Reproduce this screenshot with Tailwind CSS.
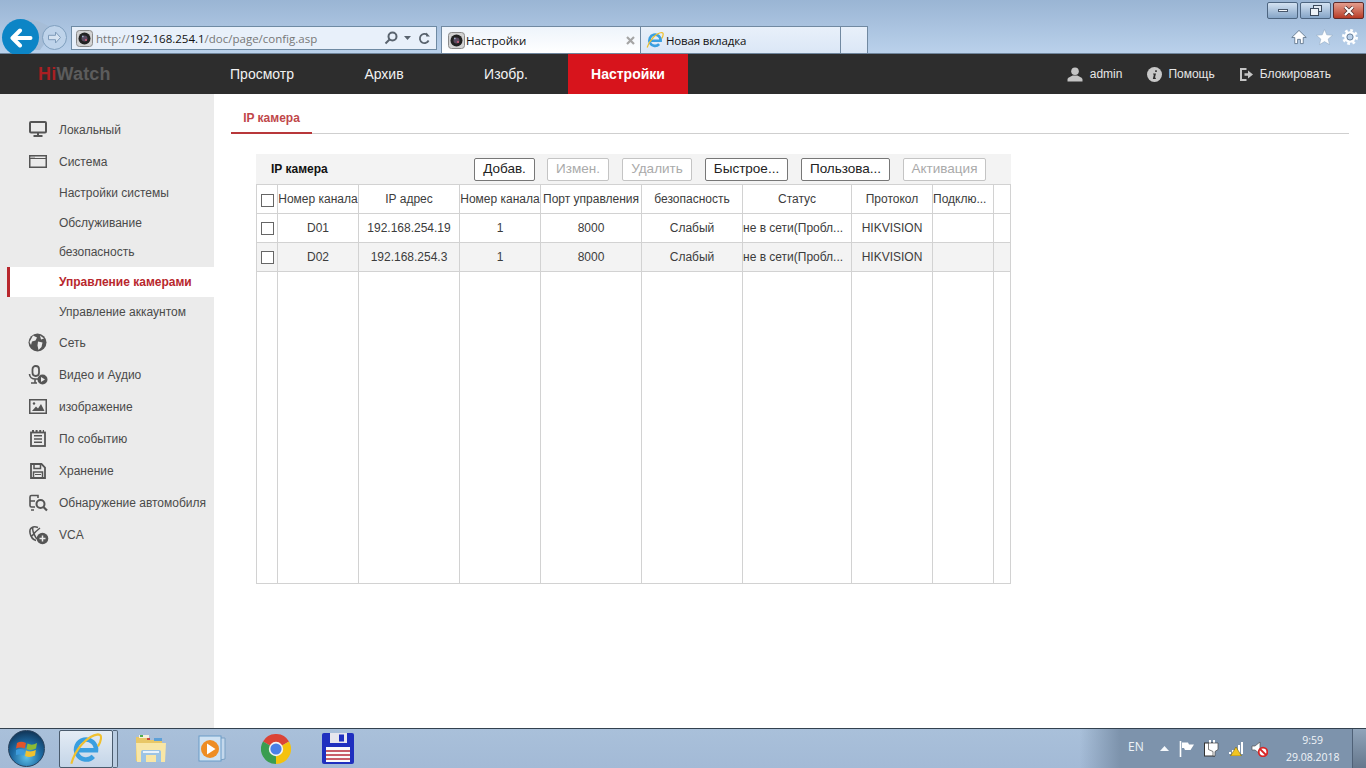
<!DOCTYPE html>
<html lang="ru">
<head>
<meta charset="utf-8">
<title>Настройки</title>
<script src="https://cdn.jsdelivr.net/npm/@tailwindcss/browser@4"></script>
</head>
<body class="w-[1366px] h-[768px] overflow-hidden bg-white font-['Liberation_Sans',Arial,sans-serif] text-[12px] text-[#404040] flex flex-col">

<!-- Browser chrome -->
<div class="h-[54px] shrink-0 relative bg-gradient-to-b from-[#9ab5d4] to-[#bad1eb] border-b border-[#6f859c] font-['Open_Sans',sans-serif]">
  <!-- window buttons -->
  <div class="absolute top-[2px] right-[2px] flex gap-[2px]">
    <div class="w-[31px] h-[17px] rounded-[2px] border border-[#4d6580] bg-gradient-to-b from-[#d3e2f2] to-[#86a5c7] flex items-center justify-center"><div class="w-[10px] h-[3px] bg-[#f4f7fb] border border-[#47566a]"></div></div>
    <div class="w-[31px] h-[17px] rounded-[2px] border border-[#4d6580] bg-gradient-to-b from-[#d3e2f2] to-[#86a5c7] flex items-center justify-center">
      <svg width="12" height="11" viewBox="0 0 12 11" fill="none" stroke="#3c4a5c"><rect x="3.5" y="0.5" width="8" height="6" fill="#dfe8f2"/><rect x="0.5" y="3.5" width="8" height="7" fill="#eef3f8"/></svg>
    </div>
    <div class="w-[31px] h-[17px] rounded-[2px] border border-[#5e2b2b] bg-gradient-to-b from-[#e39d8e] to-[#b73a26] flex items-center justify-center">
      <svg width="14" height="10" viewBox="0 0 14 10"><path d="M3 1L11 9M11 1L3 9" stroke="#4b2a2a" stroke-width="3.6"/><path d="M3 1L11 9M11 1L3 9" stroke="#fff" stroke-width="2.2"/></svg>
    </div>
  </div>
  <!-- tool icons -->
  <div class="absolute top-[29px] right-[8px] flex items-center gap-[9px]">
    <svg width="16" height="16" viewBox="0 0 17 17"><path d="M8.5 1.5L.8 9H4V15.5H7V11H10V15.5H13V9H16.2Z" fill="#fdfeff" stroke="#5e7389" stroke-width=".9"/></svg>
    <svg width="17" height="16" viewBox="0 0 18 17"><path d="M9 .5L11.4 6.2L17.6 6.7L12.9 10.7L14.3 16.6L9 13.4L3.7 16.6L5.1 10.7L.4 6.7L6.6 6.2Z" fill="#fdfeff" stroke="#8ba2ba" stroke-width=".5"/></svg>
    <svg width="16" height="16" viewBox="0 0 17 17"><circle cx="8.5" cy="8.5" r="7" fill="none" stroke="#fdfeff" stroke-width="3" stroke-dasharray="2.8 2.7"/><circle cx="8.5" cy="8.5" r="5" fill="none" stroke="#fdfeff" stroke-width="2.4"/><circle cx="8.5" cy="8.5" r="3.2" fill="#bad1eb" stroke="#5e7389" stroke-width=".8"/></svg>
  </div>

  <!-- wedge behind the back button -->
  <svg width="30" height="32" viewBox="0 0 30 32" class="absolute left-[26px] top-[18px]"><path d="M0 1C10 1 18 5 28 12L14 32H0Z" fill="#a6bdd7"/></svg>

  <div class="absolute left-0 right-0 bottom-0 h-[28px] flex items-end">
    <!-- back / forward -->
    <div class="w-[37px] h-[37px] ml-[2px] mb-[-3px] rounded-full bg-[#0c85c6] flex items-center justify-center shrink-0 z-10">
      <svg width="24" height="20" viewBox="0 0 24 20" fill="none" stroke="#fff" stroke-width="4" stroke-linecap="round" stroke-linejoin="round"><path d="M11 2.5L3.5 10L11 17.5M4 10H21.5"/></svg>
    </div>
    <div class="w-[25px] h-[25px] ml-[3px] mb-[3px] rounded-full border border-[#7f9fbe] bg-[#bed3ea] flex items-center justify-center shrink-0 z-10">
      <svg width="15" height="13" viewBox="0 0 15 13" fill="#d6e3f1" stroke="#7f9cba"><path d="M8.5 1L13.5 6.5L8.5 12V8.7H1.5V4.3H8.5Z"/></svg>
    </div>
    <!-- address -->
    <div class="w-[366px] h-[24px] ml-[4px] mb-[3px] border border-[#6e8aa3] bg-[#e8f0fa] flex items-center pl-[4px] pr-[5px] text-[11.5px] text-[#777] shrink-0 z-10">
      <svg width="17" height="17" viewBox="0 0 17 17" class="shrink-0"><rect x="0.5" y="0.5" width="16" height="16" rx="3" fill="#d2d2d2" stroke="#8a8a8a"/><circle cx="8.5" cy="8.5" r="6" fill="#222"/><circle cx="8.5" cy="8.5" r="3" fill="#5a4a60"/><circle cx="10" cy="10" r="1.1" fill="#d0607a"/><circle cx="6.8" cy="6.4" r=".9" fill="#9fb4c9"/></svg>
      <span class="ml-[3px] flex-1 whitespace-nowrap pt-[1px]">http://<span class="text-[#111]">192.168.254.1</span>/doc/page/config.asp</span>
      <svg width="14" height="14" viewBox="0 0 14 14" fill="none" stroke="#59636e" stroke-width="2"><circle cx="8.5" cy="5.5" r="4"/><path d="M5.5 8.5L1.5 12.5"/></svg>
      <svg width="8" height="4" viewBox="0 0 8 4" class="ml-[6px]"><path d="M0 0H7L3.5 4Z" fill="#59636e"/></svg>
      <svg width="13" height="13" viewBox="0 0 13 13" fill="none" class="ml-[6px]" stroke="#59636e" stroke-width="1.8"><path d="M10.6 8.5A4.6 4.6 0 1 1 9.5 3"/><path d="M8.2 0.5V4.4H12" stroke="none" fill="#59636e"/></svg>
    </div>
    <!-- tabs -->
    <div class="w-[200px] h-[27px] ml-[4px] border border-b-0 border-[#7189a1] bg-gradient-to-b from-[#eef4fb] to-white flex items-center pl-[6px] pr-[5px] text-[11.5px] text-[#111] shrink-0">
      <svg width="17" height="17" viewBox="0 0 17 17" class="shrink-0"><rect x="0.5" y="0.5" width="16" height="16" rx="3" fill="#d2d2d2" stroke="#8a8a8a"/><circle cx="8.5" cy="8.5" r="6" fill="#222"/><circle cx="8.5" cy="8.5" r="3" fill="#5a4a60"/><circle cx="10" cy="10" r="1.1" fill="#d0607a"/><circle cx="6.8" cy="6.4" r=".9" fill="#9fb4c9"/></svg>
      <span class="ml-[1px] flex-1 pt-[2px]">Настройки</span>
      <svg width="9" height="9" viewBox="0 0 9 9" class="mt-[1px]"><path d="M1 1L8 8M8 1L1 8" stroke="#a5a5a5" stroke-width="2.2"/></svg>
    </div>
    <div class="w-[200px] h-[27px] border-r border-t border-[#7189a1] bg-gradient-to-b from-[#e8f0fa] to-[#dbe7f6] flex items-center pl-[5px] text-[11.5px] text-[#111] shrink-0">
      <svg width="18" height="18" viewBox="0 0 24 24" fill="none" class="shrink-0"><path d="M5 13H19.5A7.5 7.5 0 1 0 17.5 17.5" stroke="#3a9fe0" stroke-width="3.6"/><path d="M1.5 22C5 12 13 3 21 2C24 2 23 7 21 10" stroke="#f0c02e" stroke-width="1.6"/></svg>
      <span class="ml-[2px] pt-[2px] tracking-[-0.15px]">Новая вкладка</span>
    </div>
    <div class="w-[27px] h-[27px] border-r border-t border-[#7189a1] bg-gradient-to-b from-[#e8f0fa] to-[#dbe7f6] shrink-0"></div>
  </div>
</div>

<!-- App header -->
<header class="relative z-20 h-[40px] shrink-0 bg-[#2d2d2d] flex items-center text-[14px]">
  <div class="w-[202px] pl-[38px] text-[18px] font-bold tracking-[0.2px] shrink-0"><span class="text-[#a91f22]">Hi</span><span class="text-[#5c5c5c]">Watch</span></div>
  <nav class="flex gap-[2px] h-full">
    <a class="w-[120px] flex items-center justify-center text-[#f2f2f2]">Просмотр</a>
    <a class="w-[120px] flex items-center justify-center text-[#f2f2f2]">Архив</a>
    <a class="w-[120px] flex items-center justify-center text-[#f2f2f2]">Изобр.</a>
    <a class="w-[120px] flex items-center justify-center text-white font-bold bg-[#d7141c]">Настройки</a>
  </nav>
  <div class="ml-auto flex items-center h-full text-[12px] text-[#e6e6e6] pr-[35px]">
    <svg width="16" height="15" viewBox="0 0 16 15" fill="#c4c4c4"><circle cx="8" cy="4.2" r="3.8"/><path d="M0.5 14.5V12.5C0.5 10.5 4 9.5 5.5 8.5H10.5C12 9.5 15.5 10.5 15.5 12.5V14.5Z"/></svg>
    <span class="ml-[7px]">admin</span>
    <svg width="15" height="15" viewBox="0 0 15 15" class="ml-[25px]"><circle cx="7.5" cy="7.5" r="7.5" fill="#c8c8c8"/><path d="M8.2 3.2h1.6v1.7H8.2zM6.2 6.4H9L7.9 10.8H9L8.7 12H5.8L6.9 7.6H6Z" fill="#2d2d2d"/></svg>
    <span class="ml-[6px]">Помощь</span>
    <svg width="13" height="13" viewBox="0 0 13 13" class="ml-[25px]" fill="#c4c4c4"><path d="M0 0H6.5V2H2V11H6.5V13H0Z"/><path d="M4.5 5.2H8V2.5L13 6.5L8 10.5V7.8H4.5Z"/></svg>
    <span class="ml-[7px]">Блокировать</span>
  </div>
</header>

<div class="flex-1 flex min-h-0">
  <!-- Sidebar -->
  <aside class="w-[214px] shrink-0 bg-[#ebebeb] pt-[19px] pl-[7px] text-[12px] text-[#4a4a4a]">
    <div class="h-[32px] flex items-center pl-[22px]">
      <svg width="18" height="16" viewBox="0 0 18 16" fill="none" class="shrink-0" stroke="#555" stroke-width="2"><rect x="1" y="1" width="16" height="10.5" rx="1"/><path d="M9 12V15M4.5 15H13.5"/></svg>
      <span class="ml-[12px] pt-[1px]">Локальный</span>
    </div>
    <div class="h-[32px] flex items-center pl-[22px]">
      <svg width="18" height="13" viewBox="0 0 18 13" fill="none" class="shrink-0" stroke="#555"><rect x="0.75" y="0.75" width="16.5" height="11.5" stroke-width="1.5"/><path d="M1 3.5H17" stroke-width="1"/><path d="M2.5 2.2H6" stroke-width="1" stroke-dasharray="1 1"/></svg>
      <span class="ml-[12px] pt-[1px]">Система</span>
    </div>
    <div class="h-[30px] flex items-center pl-[52px] pt-[1px]">Настройки системы</div>
    <div class="h-[30px] flex items-center pl-[52px] pt-[1px]">Обслуживание</div>
    <div class="h-[30px] flex items-center pl-[52px]">безопасность</div>
    <div class="h-[30px] flex items-center pl-[49px] pb-[1px] bg-white border-l-[3px] border-[#b8272d] font-bold text-[#b8272d]">Управление камерами</div>
    <div class="h-[30px] flex items-center pl-[52px] pb-[1px]">Управление аккаунтом</div>
    <div class="h-[32px] flex items-center pl-[21px] pb-[1px]">
      <svg width="19" height="19" viewBox="0 0 19 19" class="shrink-0"><circle cx="9.5" cy="9.5" r="9" fill="#555"/><path d="M5 2.5L9 4.5L7.5 7.5L4 8.5L3 12L1.5 9ZM10 8.5L14.5 9.5L13.5 14L10.5 17L9.5 12.5ZM12 2.5L16 5.5L13 6.5Z" fill="#ebebeb"/></svg>
      <span class="ml-[12px]">Сеть</span>
    </div>
    <div class="h-[32px] flex items-center pl-[21px] pb-[1px]">
      <svg width="20" height="20" viewBox="0 0 20 20" class="shrink-0" fill="none"><rect x="4.5" y="1" width="6.5" height="10" rx="3.2" stroke="#555" stroke-width="1.8"/><path d="M1.5 9C1.5 12 4 14 7.5 14H10M7 14V17.5M3 18H9" stroke="#555" stroke-width="1.6"/><circle cx="14.5" cy="14.5" r="5" fill="#555"/><path d="M13 12L17 14.5L13 17Z" fill="#ebebeb"/></svg>
      <span class="ml-[11px]">Видео и Аудио</span>
    </div>
    <div class="h-[32px] flex items-center pl-[22px] pb-[1px]">
      <svg width="18" height="15" viewBox="0 0 18 15" class="shrink-0"><rect x="0.75" y="0.75" width="16.5" height="13.5" fill="#ebebeb" stroke="#555" stroke-width="1.5"/><path d="M3 12L7 7.5L9 9.5L12 5L15.5 12Z" fill="#555"/><circle cx="5" cy="4.5" r="1.2" fill="#555"/></svg>
      <span class="ml-[12px]">изображение</span>
    </div>
    <div class="h-[32px] flex items-center pl-[23px] pb-[1px]">
      <svg width="16" height="17" viewBox="0 0 16 17" class="shrink-0" fill="none" stroke="#555"><rect x="1" y="2.5" width="14" height="13.5" stroke-width="1.8"/><path d="M4 5.8H12M4 9H12M4 12.2H12" stroke-width="1.5"/><path d="M2 1H14" stroke-width="2" stroke-dasharray="2 1.6"/></svg>
      <span class="ml-[13px]">По событию</span>
    </div>
    <div class="h-[32px] flex items-center pl-[23px] pb-[1px]">
      <svg width="16" height="16" viewBox="0 0 16 16" class="shrink-0" fill="none" stroke="#555" stroke-width="1.8"><path d="M1 1H11.5L15 4.5V15H1Z"/><path d="M4 1V5.5H10.5V1M3.5 15V9H12.5V15" stroke-width="1.5"/><path d="M5 11.5H11" stroke-width="1"/></svg>
      <span class="ml-[13px]">Хранение</span>
    </div>
    <div class="h-[32px] flex items-center pl-[21px] pb-[1px]">
      <svg width="20" height="18" viewBox="0 0 20 18" class="shrink-0" fill="none" stroke="#555" stroke-width="1.6"><path d="M7 13H3.5C2.5 13 2 12.5 2 11.5V3C2 2 2.5 1.5 3.5 1.5H10V4"/><path d="M2 7H7M3 16H6" /><circle cx="12.5" cy="10" r="4" stroke-width="2"/><path d="M15.5 13L19 16.5" stroke-width="2.2"/></svg>
      <span class="ml-[11px]">Обнаружение автомобиля</span>
    </div>
    <div class="h-[32px] flex items-center pl-[21px] pb-[1px]">
      <svg width="21" height="20" viewBox="0 0 21 20" class="shrink-0" fill="none"><path d="M10 2.5C5 0.5 1 3 2 8C3 13 6 15 8 15.5M5 2C3.5 6 8 13 9 14M12 3C8 6 6 8 4 11" stroke="#555" stroke-width="1.5"/><circle cx="14.5" cy="13.5" r="5.8" fill="#555"/><path d="M14.5 10.5V16.5M11.5 13.5H17.5" stroke="#ebebeb" stroke-width="1.5"/></svg>
      <span class="ml-[10px]">VCA</span>
    </div>
  </aside>

  <!-- Main -->
  <main class="flex-1 min-w-0 pl-[17px] pr-[17px]">
    <div class="h-[40px] border-b border-[#cfcfcf] flex items-end">
      <div class="w-[81px] h-[26px] mb-[-1px] border-b-2 border-[#b8373a] text-center font-bold text-[#c0474a] pt-[1px]">IP камера</div>
    </div>
    <section class="ml-[25px] mt-[20px] w-[755px] text-[12px] text-[#3c3c3c]">
      <div class="h-[30px] bg-[#f3f3f3] flex items-center pl-[15px] text-[#111]">
        <div class="w-[203px] font-bold shrink-0">IP камера</div>
        <div class="flex gap-[13px] text-[13.5px]">
          <div class="w-[61px] h-[23px] mr-[-1px] rounded-[2px] border border-[#777] bg-white flex items-center justify-center text-[#222]">Добав.</div>
          <div class="w-[62px] h-[23px] rounded-[2px] border border-[#c4c4c4] bg-white flex items-center justify-center text-[#aaa]">Измен.</div>
          <div class="w-[70px] h-[23px] rounded-[2px] border border-[#c4c4c4] bg-white flex items-center justify-center text-[#aaa]">Удалить</div>
          <div class="w-[83px] h-[23px] rounded-[2px] border border-[#777] bg-white flex items-center justify-center text-[#222]">Быстрое...</div>
          <div class="w-[89px] h-[23px] rounded-[2px] border border-[#777] bg-white flex items-center justify-center text-[#222]">Пользова...</div>
          <div class="w-[83px] h-[23px] rounded-[2px] border border-[#c4c4c4] bg-white flex items-center justify-center text-[#aaa]">Активация</div>
        </div>
      </div>
      <table class="w-[754px] table-fixed border-collapse [&_td]:border [&_td]:border-[#d2d2d2] [&_td]:overflow-hidden [&_td]:whitespace-nowrap [&_td]:p-0 [&_td]:text-center">
        <colgroup>
          <col class="w-[21px]"><col class="w-[81px]"><col class="w-[101px]"><col class="w-[81px]"><col class="w-[101px]"><col class="w-[101px]"><col class="w-[109px]"><col class="w-[81px]"><col class="w-[61px]"><col class="w-[17px]">
        </colgroup>
        <tr class="h-[29px]">
          <td><div class="w-[13px] h-[13px] border border-[#666] bg-white mx-auto mt-[3px]"></div></td>
          <td>Номер канала</td><td>IP адрес</td><td>Номер канала</td><td>Порт управления</td><td>безопасность</td><td>Статус</td><td>Протокол</td><td class="!text-left">Подклю...</td><td></td>
        </tr>
        <tr class="h-[29px]">
          <td><div class="w-[13px] h-[13px] border border-[#666] bg-white mx-auto mt-[1px]"></div></td>
          <td>D01</td><td>192.168.254.19</td><td>1</td><td>8000</td><td>Слабый</td><td class="!text-left">не в сети(Пробл...</td><td>HIKVISION</td><td></td><td></td>
        </tr>
        <tr class="h-[29px] bg-[#f3f3f3]">
          <td><div class="w-[13px] h-[13px] border border-[#666] bg-white mx-auto mt-[1px]"></div></td>
          <td>D02</td><td>192.168.254.3</td><td>1</td><td>8000</td><td>Слабый</td><td class="!text-left">не в сети(Пробл...</td><td>HIKVISION</td><td></td><td></td>
        </tr>
        <tr class="h-[312px]">
          <td></td><td></td><td></td><td></td><td></td><td></td><td></td><td></td><td></td><td></td>
        </tr>
      </table>
    </section>
  </main>
</div>

<!-- Taskbar -->
<footer class="h-[40px] shrink-0 border-t border-[#33414f] bg-gradient-to-b from-[#a9c0da] to-[#a3bad6] flex items-center relative font-['Open_Sans',sans-serif]">
  <div class="w-[37px] h-[37px] ml-[8px] rounded-full border border-[#28415c] bg-[radial-gradient(circle_at_50%_75%,#5fc0e8_0%,#1d6aa3_45%,#123a5e_80%)] flex items-center justify-center shrink-0">
    <svg width="22" height="20" viewBox="0 0 22 20"><path d="M1 4Q5 1.5 10 4L8.8 9.5Q4 7.5 0 9.5Z" fill="#e2542a"/><path d="M11.5 4.5Q16 7 21 4L20 9.5Q15 12 10.5 10Z" fill="#8dbb34"/><path d="M0 11Q4 9 8.5 11L7.5 16.5Q3 14.5 -1 16.5Z" fill="#3d9bdc"/><path d="M10 11.5Q15 13.5 19.8 11L19 16.5Q14 19 9 17Z" fill="#f2c12e"/></svg>
  </div>
  <div class="w-[54px] h-[38px] ml-[14px] rounded-[2px] border border-[#4a5b6d] bg-gradient-to-b from-[#e4ecf5] to-[#c4d5e8] flex items-center justify-center shrink-0">
    <svg width="32" height="32" viewBox="0 0 24 24" fill="none"><path d="M5 13H19.5A7.5 7.5 0 1 0 17.5 17.5" stroke="#3a9fe0" stroke-width="3.4"/><path d="M1 23C4 12 13 2 21 1C24.5 1 23.5 6 21 10" stroke="#f0c02e" stroke-width="1.6"/></svg>
  </div>
  <div class="w-[5px] h-[38px] border border-l-0 border-[#55677a] rounded-r-[2px] bg-[#b9cce1] shrink-0"></div>
  <!-- folder -->
  <svg width="32" height="30" viewBox="0 0 32 30" class="ml-[17px] shrink-0"><path d="M1 3H11L13 6H27V27H1Z" fill="#e8c766"/><rect x="4" y="1" width="10" height="3" fill="#f5f0dc"/><rect x="19" y="4" width="8" height="3" fill="#5da0d8"/><rect x="5" y="1" width="3" height="2" fill="#4fae4f"/><rect x="12" y="4" width="3" height="2" fill="#c9463d"/><path d="M1 9H31L30 28H2Z" fill="#f8e6a6"/><path d="M6 28V18C6 16.5 7 16 8 16H24C25 16 26 16.5 26 18V28H21V21H11V28Z" fill="#9cc4e4"/><path d="M8 18H24" stroke="#e9f3fb" stroke-width="2"/></svg>
  <!-- media -->
  <svg width="28" height="28" viewBox="0 0 28 28" class="ml-[31px] shrink-0"><path d="M22 3H27V24L22 25Z" fill="#c4d8ec" stroke="#7aa1c4"/><rect x="1" y="1" width="22" height="25" fill="#cfe2f3" stroke="#6a9cc7"/><circle cx="12" cy="14" r="9" fill="#ee8d24"/><path d="M9 8.5L17.5 14L9 19.5Z" fill="#fff"/></svg>
  <!-- chrome -->
  <svg width="30" height="30" viewBox="0 0 30 30" class="ml-[35px] shrink-0"><path d="M15 15L2 7.5A15 15 0 0 1 28 7.5Z" fill="#db4437"/><path d="M15 15L28 7.5A15 15 0 0 1 15 30Z" fill="#f4c20d"/><path d="M15 15L15 30A15 15 0 0 1 2 7.5Z" fill="#3a9d50"/><circle cx="15" cy="15" r="7.2" fill="#f4f4f4"/><circle cx="15" cy="15" r="5.6" fill="#4a80e8"/></svg>
  <!-- floppy -->
  <svg width="32" height="31" viewBox="0 0 32 31" class="ml-[31px] shrink-0"><path d="M2 0H30Q32 0 32 2V29Q32 31 30 31H2Q0 31 0 29V2Q0 0 2 0Z" fill="#1f2fbf"/><path d="M8 0H25V10H8Z" fill="#e6e6ee"/><rect x="17" y="1.5" width="5" height="7" fill="#1f2fbf"/><rect x="4" y="14" width="24" height="15" fill="#fafafa"/><path d="M4 18H28M4 22H28M4 26H28" stroke="#b82a3a" stroke-width="1.4"/></svg>

  <!-- tray -->
  <div class="ml-auto h-full w-[40px] bg-gradient-to-r from-[#a6bdd8]/0 to-[#7d93ac] shrink-0"></div>
  <div class="h-full w-[246px] bg-[#7d93ac] flex items-center text-white text-[12px] shrink-0">
    <span class="ml-[8px] text-[#eef3f8] pb-[3px]">EN</span>
    <svg width="9" height="5" viewBox="0 0 9 5" class="ml-[16px]"><path d="M0 5L4.5 0L9 5Z" fill="#f5f8fb"/></svg>
    <svg width="16" height="16" viewBox="0 0 16 16" class="ml-[10px]"><path d="M1.5 0V16" stroke="#fff" stroke-width="1.6"/><path d="M3 1.5H9L10 3.5H15L11.5 9H6L5 7H3Z" fill="#fff"/></svg>
    <svg width="15" height="17" viewBox="0 0 15 17" class="ml-[9px]"><rect x="0.5" y="3" width="10" height="13" fill="#fff" stroke="#333"/><path d="M6 0V3M10 0V3" stroke="#fff" stroke-width="2"/><path d="M4.5 3H14V9.5L11 11.5V16H9V11.5L4.5 9.5Z" fill="#fff" stroke="#444" stroke-width=".7"/></svg>
    <svg width="16" height="15" viewBox="0 0 16 15" class="ml-[9px]"><path d="M1 11h2v2H1ZM4 9h2v4H4ZM7 7h2v6H7ZM10 4h2v9h-2ZM13 1h2v12h-2Z" fill="#fff"/><path d="M8 6L13.5 15H2.5Z" fill="#f2c521" stroke="#7b6513" stroke-width=".6"/></svg>
    <svg width="17" height="16" viewBox="0 0 17 16" class="ml-[7px]"><path d="M1 5H4L9 1V13L4 9H1Z" fill="#fff" stroke="#555" stroke-width=".7"/><circle cx="12" cy="11" r="4.3" fill="#fff" stroke="#d92525" stroke-width="1.8"/><path d="M9 8L15 14" stroke="#d92525" stroke-width="1.8"/></svg>
    <div class="w-[66px] ml-[12px] text-center text-[10.5px] leading-[17px] text-[#f0f4f8]"><div>9:59</div><div class="whitespace-nowrap">29.08.2018</div></div>
    <div class="w-[14px] h-full ml-auto border-l border-[#4f6177] bg-gradient-to-b from-[#90a4ba] to-[#66788d]"></div>
  </div>
</footer>
</body>
</html>
